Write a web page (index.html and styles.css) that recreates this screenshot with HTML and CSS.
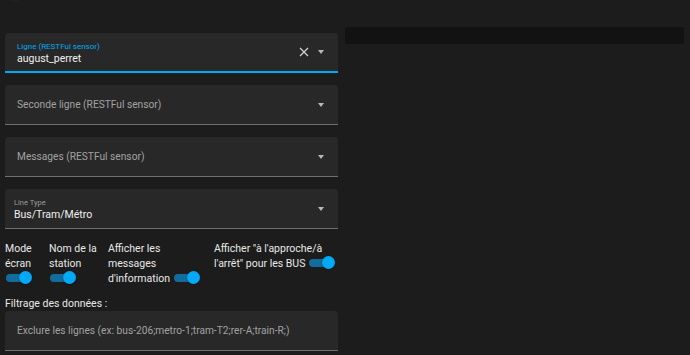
FILE: index.html
```html
<!DOCTYPE html>
<html lang="fr">
<head>
<meta charset="utf-8">
<link rel="stylesheet" href="styles.css">
</head>
<body>
<div class="page">
  <div class="corner-btn"></div>
  <div class="editor">
    <div class="field focused">
      <div class="field-text">
        <span class="float-label blue">Ligne (RESTFul sensor)</span>
        <span class="value">august_perret</span>
      </div>
      <svg class="clear" width="10" height="10" viewBox="0 0 10 10"><path d="M1 1L9 9M9 1L1 9" stroke="#cfcfcf" stroke-width="1.3" fill="none"/></svg>
      <span class="caret"></span>
    </div>
    <div class="field">
      <div class="field-text"><span class="placeholder">Seconde ligne (RESTFul sensor)</span></div>
      <span class="caret"></span>
    </div>
    <div class="field">
      <div class="field-text"><span class="placeholder">Messages (RESTFul sensor)</span></div>
      <span class="caret"></span>
    </div>
    <div class="field select">
      <div class="field-text">
        <span class="float-label small">Line Type</span>
        <span class="value">Bus/Tram/Métro</span>
      </div>
      <span class="caret"></span>
    </div>
    <div class="switches">
      <div class="sw-item c1">Mode écran <span class="toggle"><span class="track"></span><span class="knob"></span></span></div>
      <div class="sw-item c2">Nom de la station <span class="toggle"><span class="track"></span><span class="knob"></span></span></div>
      <div class="sw-item c3">Afficher les messages d'information <span class="toggle"><span class="track"></span><span class="knob"></span></span></div>
      <div class="sw-item c4">Afficher "à l'approche/à l'arrêt" pour les BUS <span class="toggle"><span class="track"></span><span class="knob"></span></span></div>
    </div>
    <div class="section-title">Filtrage des données :</div>
    <div class="field">
      <div class="field-text"><span class="placeholder">Exclure les lignes (ex: bus-206;metro-1;tram-T2;rer-A;train-R;)</span></div>
    </div>
  </div>
  <div class="preview">
    <div class="preview-bar"></div>
  </div>
</div>
</body>
</html>
```

FILE: styles.css
```css
* { box-sizing: border-box; }
html, body {
  margin: 0;
  padding: 0;
  background: #1c1c1c;
  height: 100%;
  overflow: hidden;
}
body {
  font-family: Roboto, "Liberation Sans", sans-serif;
  color: #e1e1e1;
  font-size: 10.2px;
}
.page {
  position: relative;
  display: flex;
  gap: 7px;
  padding: 0 6px 0 5px;
}
.corner-btn {
  position: absolute;
  left: 2px;
  top: -24px;
  width: 26px;
  height: 26px;
  border-radius: 50%;
  background: #202020;
}
.editor {
  width: 333px;
  flex: none;
  padding-top: 33px;
  display: flex;
  flex-direction: column;
}
.preview {
  flex: 1;
  padding-top: 27px;
}
.preview-bar {
  height: 17px;
  background: #121212;
  border-radius: 3px;
}
.field {
  height: 40px;
  background: #282828;
  border-radius: 4px 4px 0 0;
  border-bottom: 1px solid #6f6f6f;
  display: flex;
  align-items: center;
  padding: 0 12px 0 12px;
  margin-bottom: 12px;
}
.field.focused {
  border-bottom: 2px solid #03a9f4;
  height: 40px;
}
.field.select { padding-left: 9px; }
.field-text {
  flex: 1;
  display: flex;
  flex-direction: column;
  min-width: 0;
}
.float-label {
  font-size: 8px;
  line-height: 10px;
  color: #a0a0a0;
}
.float-label.blue { color: #03a9f4; margin-top: 2px; }
.float-label.small { font-size: 7.5px; color: #9a9a9a; margin-top: 1px; }
.value {
  font-size: 10.5px;
  line-height: 13px;
  color: #f0f0f0;
}
.placeholder {
  color: #a2a2a2;
  line-height: 14px;
  white-space: nowrap;
}
.clear {
  margin-right: 9px;
  flex: none;
}
.caret {
  flex: none;
  width: 0;
  height: 0;
  border-left: 3.5px solid transparent;
  border-right: 3.5px solid transparent;
  border-top: 4px solid #b8b8b8;
  margin-right: 2px;
}
.switches {
  display: grid;
  grid-template-columns: 44px 59px 106px 1fr;
  line-height: 15px;
  color: #e8e8e8;
  font-size: 10.5px;
}
.sw-item { padding-right: 4px; }
.c3 { padding-right: 7px; }
.c4 { padding-right: 0; }
.toggle {
  position: relative;
  display: inline-block;
  width: 26px;
  height: 13px;
  vertical-align: middle;
  margin-left: 1px;
  margin-top: -3px;
}
.track {
  position: absolute;
  left: 0;
  top: 3px;
  width: 23px;
  height: 8px;
  border-radius: 4px;
  background: #136c9b;
}
.knob {
  position: absolute;
  left: 13px;
  top: 0;
  width: 13px;
  height: 13px;
  border-radius: 50%;
  background: #03a9f4;
  box-shadow: 0 1px 2px rgba(0,0,0,0.4);
}
.section-title {
  line-height: 15px;
  margin-top: 10px;
  color: #e8e8e8;
  font-size: 10.5px;
}
```
